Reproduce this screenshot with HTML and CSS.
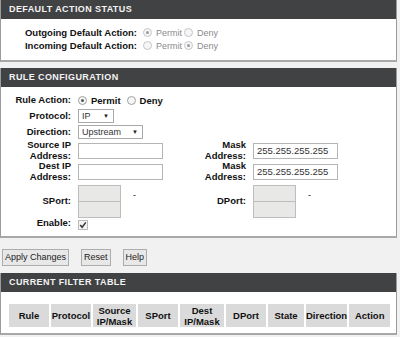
FILE: index.html
```html
<!DOCTYPE html>
<html>
<head>
<meta charset="utf-8">
<link rel="stylesheet" href="styles.css">
</head>
<body>
<div class="box box-status">
  <div class="box-head">DEFAULT ACTION STATUS</div>
  <div class="status-body">
    <div class="status-row">
      <span class="lbl">Outgoing Default Action:</span>
      <span class="radio checked"></span><span class="opt">Permit</span>
      <span class="radio"></span><span class="opt">Deny</span>
    </div>
    <div class="status-row">
      <span class="lbl">Incoming Default Action:</span>
      <span class="radio"></span><span class="opt">Permit</span>
      <span class="radio checked"></span><span class="opt">Deny</span>
    </div>
  </div>
</div>

<div class="box box-rule">
  <div class="box-head">RULE CONFIGURATION</div>
  <div class="rule-body">
    <div class="lbl">Rule Action:</div>
    <div class="ctl span3">
      <span class="radio checked dark"></span><span class="opt bold">Permit</span>
      <span class="radio dark"></span><span class="opt bold">Deny</span>
    </div>

    <div class="lbl">Protocol:</div>
    <div class="ctl span3"><span class="select sel-ip">IP<span class="arr">▼</span></span></div>

    <div class="lbl">Direction:</div>
    <div class="ctl span3"><span class="select sel-dir">Upstream<span class="arr">▼</span></span></div>

    <div class="lbl two">Source IP<br>Address:</div>
    <div class="ctl"><span class="input"></span></div>
    <div class="lbl two">Mask<br>Address:</div>
    <div class="ctl"><span class="input">255.255.255.255</span></div>

    <div class="lbl two">Dest IP<br>Address:</div>
    <div class="ctl"><span class="input"></span></div>
    <div class="lbl two">Mask<br>Address:</div>
    <div class="ctl"><span class="input">255.255.255.255</span></div>

    <div class="lbl port-lbl">SPort:</div>
    <div class="ctl port"><span class="pbox-stack"><span class="pbox"></span><span class="pbox"></span></span><span class="dash">-</span></div>
    <div class="lbl port-lbl">DPort:</div>
    <div class="ctl port"><span class="pbox-stack"><span class="pbox"></span><span class="pbox"></span></span><span class="dash">-</span></div>

    <div class="lbl en-lbl">Enable:</div>
    <div class="ctl span3 en-ctl"><span class="check"><svg width="8" height="8" viewBox="0 0 8 8"><path d="M1.2 4 L3.1 6.2 L6.8 1.4" fill="none" stroke="#333" stroke-width="1.5"/></svg></span></div>
  </div>
</div>

<div class="buttons">
  <span class="btn">Apply Changes</span>
  <span class="btn">Reset</span>
  <span class="btn">Help</span>
</div>

<div class="box box-table">
  <div class="box-head">CURRENT FILTER TABLE</div>
  <div class="table-body">
    <table class="ftable">
      <tr>
        <th>Rule</th>
        <th>Protocol</th>
        <th>Source<br>IP/Mask</th>
        <th>SPort</th>
        <th>Dest<br>IP/Mask</th>
        <th>DPort</th>
        <th>State</th>
        <th>Direction</th>
        <th>Action</th>
      </tr>
    </table>
  </div>
</div>
</body>
</html>
```

FILE: styles.css
```css
html, body {
  margin: 0;
  padding: 0;
}
body {
  background: #f1f1f1;
  width: 400px;
  height: 337px;
  overflow: hidden;
  font-family: "Liberation Sans", Arial, sans-serif;
  font-size: 9.5px;
  color: #111;
}
.box {
  width: 395px;
  background: #fff;
  border: 1px solid #9c9c9c;
  border-bottom: 2px solid #a8a8a8;
  border-top: none;
}
.box-head {
  background: #414243;
  color: #f4f4f4;
  font-weight: bold;
  font-size: 9px;
  height: 19px;
  line-height: 19px;
  padding-left: 8px;
  letter-spacing: 0.4px;
}
.box-status {
  height: 60px;
}
.status-body {
  padding-top: 7px;
}
.status-row {
  display: flex;
  align-items: center;
  height: 13px;
}
.status-row .lbl {
  text-align: right;
  font-weight: bold;
  padding-right: 6px;
  box-sizing: border-box;
  width: 142px;
}
.radio {
  display: inline-block;
  width: 7px;
  height: 7px;
  border: 1px solid #c6c6c6;
  border-radius: 50%;
  background: #f6f6f6;
  position: relative;
  margin-right: 4px;
}
.radio.checked::after {
  content: "";
  position: absolute;
  left: 2px;
  top: 2px;
  width: 3px;
  height: 3px;
  border-radius: 50%;
  background: #9a9a9a;
}
.radio.dark {
  border-color: #a0a0a0;
}
.radio.dark.checked::after {
  background: #555;
}
.opt {
  color: #8a8a8a;
  font-size: 9px;
  margin-right: 2px;
}
.opt.bold {
  color: #111;
  font-weight: bold;
  font-size: 9.5px;
  margin-right: 6px;
}

.box-rule {
  margin-top: 6px;
  height: 168px;
}
.rule-body {
  display: grid;
  grid-template-columns: 62px 121px 40px auto;
  column-gap: 7px;
  padding: 5px 0 0 8px;
  align-items: center;
}
.rule-body .lbl {
  text-align: right;
  font-weight: bold;
  line-height: 10.5px;
}
.span3 {
  grid-column: 2 / 5;
}
.ctl {
  display: flex;
  align-items: center;
  height: 16px;
}
.lbl.two, .lbl.two + .ctl {
  height: 21px;
}
.lbl.two {
  display: flex;
  align-items: center;
  justify-content: flex-end;
}
.select {
  display: inline-flex;
  align-items: center;
  justify-content: space-between;
  height: 12px;
  border: 1px solid #a9a9a9;
  background: #fff;
  font-size: 9px;
  color: #333;
  padding: 0 4px 0 3px;
  box-sizing: content-box;
}
.sel-ip { width: 27px; }
.sel-dir { width: 56px; }
.arr {
  font-size: 6px;
  color: #222;
}
.input {
  display: inline-block;
  width: 80px;
  height: 14px;
  border: 1px solid #b5b5b5;
  background: #fff;
  font-size: 9.5px;
  line-height: 14px;
  padding-left: 3px;
  color: #333;
}
.port-lbl, .port {
  height: 33px;
  margin-top: 3px;
}
.port-lbl {
  display: flex;
  align-items: center;
  justify-content: flex-end;
}
.pbox-stack {
  display: flex;
  flex-direction: column;
}
.pbox {
  width: 41px;
  height: 15px;
  background: #e8e8e6;
  border: 1px solid #bdbdbd;
  margin-top: -1px;
}
.pbox:first-child { margin-top: 0; }
.dash {
  margin-left: 12px;
  align-self: flex-start;
  margin-top: 5px;
  font-size: 9px;
}
.en-lbl, .en-ctl {
  height: 13px;
}
.check {
  display: inline-flex;
  align-items: center;
  justify-content: center;
  width: 8px;
  height: 8px;
  border: 1px solid #bbb;
  background: #f3f3f3;
}

.buttons {
  display: flex;
  gap: 12px;
  padding: 11px 0 0 2px;
  height: 16px;
}
.btn {
  display: inline-block;
  border: 1px solid #adadad;
  background: #e8e8e8;
  font-size: 9px;
  height: 15px;
  line-height: 15px;
  padding: 0 2px;
  color: #222;
}

.box-table {
  margin-top: 8px;
  height: 60px;
}
.table-body {
  padding: 10px 0 0 6px;
}
.ftable {
  border-collapse: separate;
  border-spacing: 2px;
}
.ftable th {
  background: #dadada;
  font-weight: bold;
  font-size: 9.5px;
  line-height: 11px;
  height: 23px;
  padding: 0;
}
.ftable th:nth-child(1) { width: 40px; }
.ftable th:nth-child(2) { width: 40px; }
.ftable th:nth-child(3) { width: 43px; }
.ftable th:nth-child(4) { width: 40px; }
.ftable th:nth-child(5) { width: 44px; }
.ftable th:nth-child(6) { width: 40px; }
.ftable th:nth-child(7) { width: 36px; }
.ftable th:nth-child(8) { width: 40px; }
.ftable th:nth-child(9) { width: 41px; }
```
